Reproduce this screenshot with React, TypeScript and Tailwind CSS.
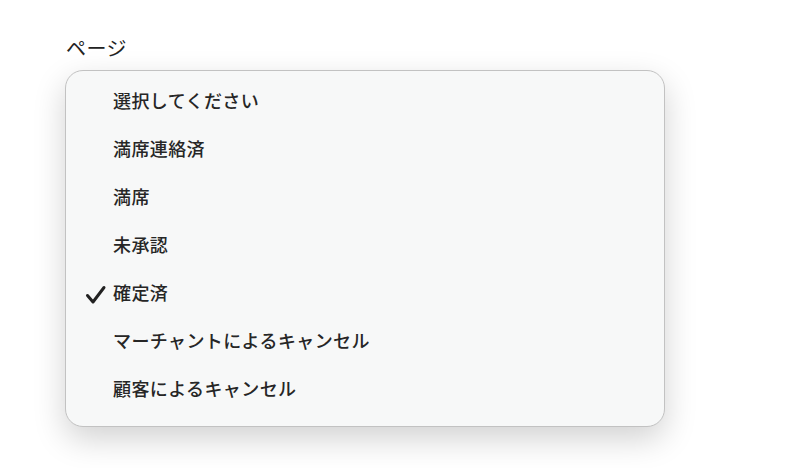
const options = [
  '選択してください',
  '満席連絡済',
  '満席',
  '未承認',
  '確定済',
  'マーチャントによるキャンセル',
  '顧客によるキャンセル',
];

const selected = '確定済';

export default function App() {
  return (
    <div
      className="min-h-[468px] w-[792px] bg-white pl-[65px] pt-[34px]"
      style={{ fontFamily: '"Noto Sans CJK JP", "Noto Sans", sans-serif' }}
    >
      <p className="pl-px text-[20px] leading-[28px] tracking-[0.5px] text-[#222]">ページ</p>
      <div className="mt-[8px] w-[600px] rounded-[18px] border border-[#c2c2c2] bg-[#f7f8f8] pt-[5px] pb-[14px] shadow-[0_12px_32px_rgba(0,0,0,0.18)]">
        {options.map((opt) => (
          <div key={opt} className="flex h-[48px] items-center">
            <div className="flex w-[47px] justify-end pr-[6px]">
              {opt === selected && (
                <svg width="22" height="20" viewBox="0 0 22 20" className="mt-[6px]">
                  <path
                    d="M2.5 10.5 L8 17 L19 2.5"
                    fill="none"
                    stroke="#222"
                    strokeWidth="3"
                    strokeLinecap="round"
                    strokeLinejoin="round"
                  />
                </svg>
              )}
            </div>
            <span className="text-[18px] font-medium tracking-[0.4px] text-[#262626]">{opt}</span>
          </div>
        ))}
      </div>
    </div>
  );
}
